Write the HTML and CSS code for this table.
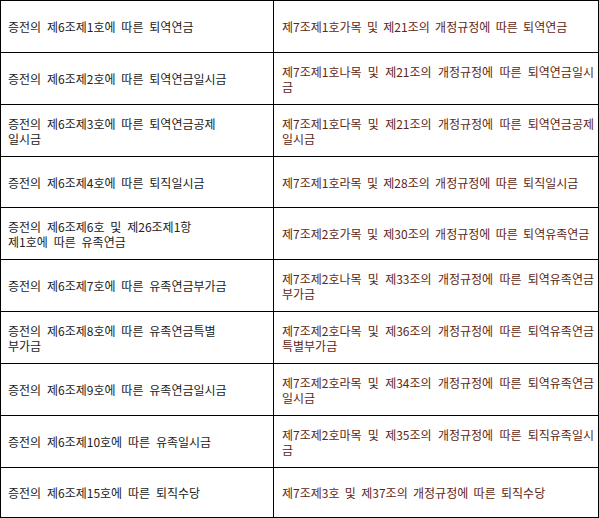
FILE: index.html
```html
<!DOCTYPE html>
<html lang="ko">
<head>
<meta charset="utf-8">
<link rel="stylesheet" href="styles.css">
</head>
<body>
<table class="map">
<tbody>
<tr><td class="old">증전의 제6조제1호에 따른 퇴역연금</td><td class="new">제7조제1호가목 및 제21조의 개정규정에 따른 퇴역연금</td></tr>
<tr><td class="old">증전의 제6조제2호에 따른 퇴역연금일시금</td><td class="new">제7조제1호나목 및 제21조의 개정규정에 따른 퇴역연금일시금</td></tr>
<tr><td class="old">증전의 제6조제3호에 따른 퇴역연금공제
일시금</td><td class="new">제7조제1호다목 및 제21조의 개정규정에 따른 퇴역연금공제일시금</td></tr>
<tr class="tight"><td class="old">증전의 제6조제4호에 따른 퇴직일시금</td><td class="new">제7조제1호라목 및 제28조의 개정규정에 따른 퇴직일시금</td></tr>
<tr><td class="old">증전의 제6조제6호 및 제26조제1항
제1호에 따른 유족연금</td><td class="new">제7조제2호가목 및 제30조의 개정규정에 따른 퇴역유족연금</td></tr>
<tr><td class="old">증전의 제6조제7호에 따른 유족연금부가금</td><td class="new">제7조제2호나목 및 제33조의 개정규정에 따른 퇴역유족연금부가금</td></tr>
<tr><td class="old">증전의 제6조제8호에 따른 유족연금특별
부가금</td><td class="new">제7조제2호다목 및 제36조의 개정규정에 따른 퇴역유족연금특별부가금</td></tr>
<tr><td class="old">증전의 제6조제9호에 따른 유족연금일시금</td><td class="new">제7조제2호라목 및 제34조의 개정규정에 따른 퇴역유족연금일시금</td></tr>
<tr><td class="old">증전의 제6조제10호에 따른 유족일시금</td><td class="new">제7조제2호마목 및 제35조의 개정규정에 따른 퇴직유족일시금</td></tr>
<tr class="last"><td class="old">증전의 제6조제15호에 따른 퇴직수당</td><td class="new">제7조제3호 및 제37조의 개정규정에 따른 퇴직수당</td></tr>
</tbody>
</table>
</body>
</html>
```

FILE: styles.css
```css
html, body {
  margin: 0;
  padding: 0;
  background: #ffffff;
}

.map {
  border-collapse: separate;
  border-spacing: 0;
  table-layout: fixed;
  width: 599px;
  border-right: 1px solid #000;
  border-bottom: 1px solid #000;
  font-family: "Noto Sans CJK KR", "Noto Sans", sans-serif;
  font-size: 12px;
  line-height: 15px;
}

.map td {
  border-top: 1px solid #000;
  border-left: 1px solid #000;
  height: 52px;
  box-sizing: border-box;
  padding: 0 4px 0 7px;
  vertical-align: middle;
  word-break: break-all;
}

.map tr.tight td {
  height: 51px;
}

.map tr.last td {
  height: 50px;
}

.map td.old {
  width: 273px;
  color: #222222;
  word-spacing: 2.5px;
  white-space: pre-line;
}

.map td.new {
  padding-left: 8px;
  text-align: justify;
  color: #5e2616;
  word-spacing: 2px;
}
```
